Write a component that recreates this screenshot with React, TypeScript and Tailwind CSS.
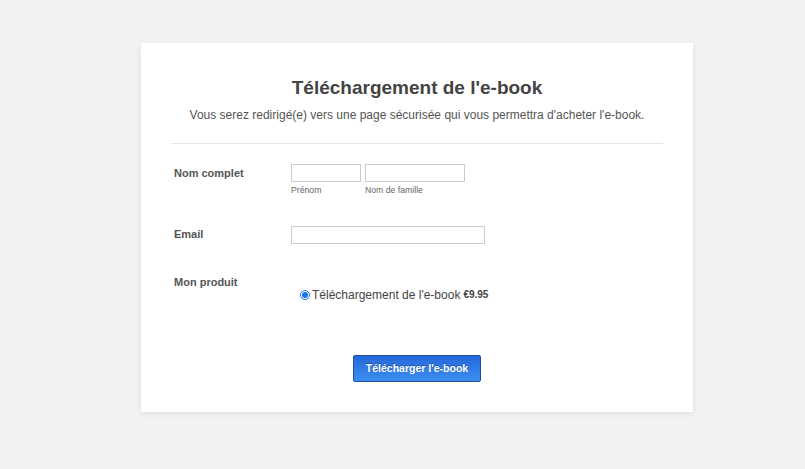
import { useState } from "react";

const font = { fontFamily: '"Liberation Sans", Arial, sans-serif' };

const Row = ({
  label,
  children,
  className,
  labelClass,
}: {
  label: string;
  children: React.ReactNode;
  className?: string;
  labelClass?: string;
}) => (
  <div className={`flex items-start ${className ?? ""}`}>
    <div className={`w-[120px] shrink-0 pl-[3px] text-[11px] font-bold leading-[18px] text-[#555] ${labelClass ?? ""}`}>{label}</div>
    <div>{children}</div>
  </div>
);

const App = () => {
  const [first, setFirst] = useState("");
  const [last, setLast] = useState("");
  const [email, setEmail] = useState("");

  return (
    <div className="min-h-[469px] w-full bg-[#f2f2f2] pt-[43px]" style={font}>
      <div className="ml-[141px] w-[552px] bg-white px-[30px] pb-[30px] pt-[33px] shadow-[0_2px_6px_rgba(0,0,0,0.08)]">
        <h1 className="text-center text-[19px] font-bold leading-[24px] text-[#444]">Téléchargement de l'e-book</h1>
        <p className="mt-[7px] text-center text-[12px] leading-[16px] text-[#555]">
          Vous serez redirigé(e) vers une page sécurisée qui vous permettra d'acheter l'e-book.
        </p>
        <div className="mt-[20px] h-px bg-[#e6e6e6]" />

        <Row label="Nom complet" className="mt-[20px]">
          <div className="flex gap-[4px]">
            <div className="flex flex-col">
              <input
                value={first}
                onChange={(e) => setFirst(e.target.value)}
                className="h-[18px] w-[70px] border border-[#ccc] px-1 text-[12px] outline-none"
              />
              <span className="mt-[2px] text-[8.7px] leading-[12px] text-[#666]">Prénom</span>
            </div>
            <div className="flex flex-col">
              <input
                value={last}
                onChange={(e) => setLast(e.target.value)}
                className="h-[18px] w-[100px] border border-[#ccc] px-1 text-[12px] outline-none"
              />
              <span className="mt-[2px] text-[8.7px] leading-[12px] text-[#666]">Nom de famille</span>
            </div>
          </div>
        </Row>

        <Row label="Email" className="mt-[26px]" labelClass="pt-[3px]">
          <input
            value={email}
            onChange={(e) => setEmail(e.target.value)}
            className="h-[18px] w-[194px] border border-[#ccc] px-1 text-[12px] outline-none"
          />
        </Row>

        <Row label="Mon produit" className="mt-[27px]">
          <label className="ml-[9px] mt-[14px] flex items-center text-[12px] leading-[16px] text-[#444]">
            <input type="radio" defaultChecked className="m-0 mr-[2px] h-[10px] w-[10px] accent-[#1a73e8]" />
            <span>Téléchargement de l'e-book</span>
            <span className="ml-[3px] text-[10px] font-bold text-[#444]">€9.95</span>
          </label>
        </Row>

        <div className="mt-[52px] flex justify-center">
          <button className="h-[27px] w-[128px] rounded-[2px] border border-[#1c4fa0] bg-gradient-to-b from-[#2568da] to-[#3d8ef0] text-[10.5px] font-bold text-white [text-shadow:0_-1px_0_rgba(0,0,0,0.3)]">
            Télécharger l'e-book
          </button>
        </div>
      </div>
    </div>
  );
};

export default App;
